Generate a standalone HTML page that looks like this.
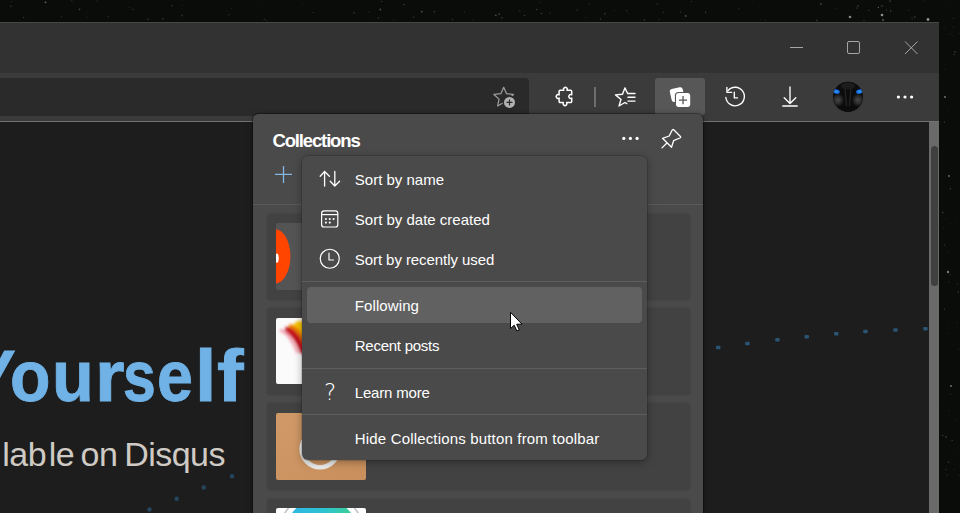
<!DOCTYPE html>
<html lang="en">
<head>
<meta charset="utf-8">
<title>Collections</title>
<style>
html,body{margin:0;padding:0;}
body{width:960px;height:513px;overflow:hidden;position:relative;background:#0a0c0a;font-family:"Liberation Sans",sans-serif;}
.abs{position:absolute;}
#stars{left:0;top:0;width:960px;height:513px;filter:blur(0.35px);}
#win{left:0;top:22px;width:939px;height:491px;background:#1d1d1d;overflow:hidden;}
#titlebar{left:0;top:0;width:939px;height:51px;background:#323232;border-top:1px solid #474747;box-sizing:border-box;}
#toolbar{left:0;top:51px;width:939px;height:48px;background:#3b3b3b;}
#tbline{left:0;top:99px;width:939px;height:1px;background:#727272;}
#addr{left:0;top:56px;width:529px;height:38px;background:#2a2a2a;border-radius:0 4px 4px 0;}
#page{left:0;top:100px;width:929px;height:391px;background:#1d1d1d;overflow:hidden;}
#sbtrack{left:929px;top:100px;width:10px;height:391px;background:#6a6a6a;}
#sbthumb{left:931px;top:124px;width:7px;height:140px;background:#404040;border-radius:3.5px;}
#activebtn{left:655px;top:56px;width:50px;height:37px;background:#575757;border-radius:3px;}
#tbicons{left:0;top:0;width:939px;height:491px;}
#h2 span{position:relative;}
#h1 span{position:absolute;top:0;display:block;transform-origin:0 0;}
#h1{-webkit-text-stroke:0.9px #70b2e6;left:0;top:218px;font-size:72px;font-weight:bold;color:#70b2e6;white-space:nowrap;line-height:1;letter-spacing:-0.4px;}
#h2{left:0px;top:314.8px;font-size:34px;color:#cfcac4;white-space:nowrap;line-height:1;letter-spacing:-0.54px;}
#panel{left:253px;top:114px;width:450px;height:399px;background:#4a4a4a;border-radius:5.5px 5.5px 0 0;box-shadow:0 1px 6px rgba(0,0,0,.42),0 0 0 1px rgba(0,0,0,.28);}
#ptitle{left:19.5px;top:18px;font-size:18.5px;font-weight:bold;color:#fff;letter-spacing:-1.15px;line-height:1;white-space:nowrap;}
#pline{left:0;top:90px;width:450px;height:1px;background:#5a5a5a;}
.card{left:14.3px;width:423.2px;height:86.6px;background:#424242;border-radius:4px;box-shadow:0 0 1.5px rgba(0,0,0,.25);}
.thumb{left:8.7px;top:9.7px;width:90.2px;height:66.6px;border-radius:2px;overflow:hidden;}
.thumb svg{position:absolute;left:0;top:0;}
#menu{left:302px;top:156px;width:345px;height:304px;background:#4a4a4a;border-radius:6px;box-shadow:0 2px 8px rgba(0,0,0,.34),0 0 0 1px rgba(0,0,0,.11);}
.mi{left:52.8px;font-size:15px;color:#fff;white-space:nowrap;line-height:1;}
.sep{left:0;width:345px;height:1px;background:#5e5e5e;}
#qm{left:21px;top:225px;width:14px;text-align:center;font-family:"DejaVu Sans Light","DejaVu Sans",sans-serif;font-weight:200;font-size:23px;line-height:1;color:#fff;}
#hover{left:5px;top:131.2px;width:335px;height:35.8px;background:#616161;border-radius:4px;}
</style>
</head>
<body>
<svg id="stars" class="abs" width="960" height="513" viewBox="0 0 960 513"><circle cx="850.0" cy="17.0" r="1.3" fill="#fff" opacity="0.50"/><circle cx="882.0" cy="15.0" r="1.3" fill="#fff" opacity="0.55"/><circle cx="883.0" cy="20.0" r="0.9" fill="#fff" opacity="0.35"/><circle cx="928.0" cy="19.5" r="1.4" fill="#fff" opacity="0.55"/><circle cx="858.0" cy="6.0" r="0.8" fill="#fff" opacity="0.25"/><circle cx="882.0" cy="6.0" r="0.8" fill="#fff" opacity="0.25"/><circle cx="890.6" cy="11.0" r="0.8" fill="#fff" opacity="0.25"/><circle cx="914.8" cy="17.0" r="0.7" fill="#fff" opacity="0.25"/><circle cx="945.0" cy="97.0" r="1.1" fill="#fff" opacity="0.40"/><circle cx="949.0" cy="176.0" r="0.9" fill="#fff" opacity="0.40"/><circle cx="948.0" cy="272.0" r="1.2" fill="#fff" opacity="0.45"/><circle cx="951.0" cy="386.0" r="1.0" fill="#fff" opacity="0.40"/><circle cx="946.0" cy="437.0" r="0.8" fill="#fff" opacity="0.25"/><circle cx="955.0" cy="52.0" r="0.7" fill="#fff" opacity="0.25"/><circle cx="434.3" cy="11.8" r="0.7" fill="#fff" opacity="0.22"/><circle cx="820.8" cy="4.0" r="0.9" fill="#fff" opacity="0.22"/><circle cx="589.4" cy="3.9" r="0.7" fill="#fff" opacity="0.17"/><circle cx="87.0" cy="17.0" r="0.4" fill="#fff" opacity="0.26"/><circle cx="380.3" cy="9.5" r="0.9" fill="#fff" opacity="0.28"/><circle cx="598.2" cy="17.5" r="0.4" fill="#fff" opacity="0.10"/><circle cx="182.6" cy="5.1" r="0.4" fill="#fff" opacity="0.31"/><circle cx="313.2" cy="12.4" r="0.5" fill="#fff" opacity="0.24"/><circle cx="614.7" cy="10.5" r="0.4" fill="#fff" opacity="0.22"/><circle cx="267.0" cy="21.0" r="0.4" fill="#fff" opacity="0.29"/><circle cx="302.7" cy="4.8" r="0.6" fill="#fff" opacity="0.09"/><circle cx="540.6" cy="2.3" r="0.4" fill="#fff" opacity="0.33"/><circle cx="371.1" cy="20.1" r="0.4" fill="#fff" opacity="0.14"/><circle cx="890.0" cy="1.1" r="0.7" fill="#fff" opacity="0.37"/><circle cx="381.5" cy="1.5" r="0.5" fill="#fff" opacity="0.31"/><circle cx="259.0" cy="1.8" r="0.6" fill="#fff" opacity="0.08"/><circle cx="393.6" cy="19.4" r="0.5" fill="#fff" opacity="0.15"/><circle cx="97.0" cy="1.3" r="0.7" fill="#fff" opacity="0.13"/><circle cx="536.9" cy="9.4" r="0.5" fill="#fff" opacity="0.38"/><circle cx="738.7" cy="8.8" r="0.7" fill="#fff" opacity="0.11"/><circle cx="403.9" cy="4.5" r="0.6" fill="#fff" opacity="0.34"/><circle cx="935.9" cy="12.4" r="0.4" fill="#fff" opacity="0.14"/><circle cx="378.5" cy="17.9" r="0.9" fill="#fff" opacity="0.11"/><circle cx="949.7" cy="4.5" r="0.6" fill="#fff" opacity="0.08"/><circle cx="585.9" cy="17.4" r="0.7" fill="#fff" opacity="0.10"/><circle cx="86.5" cy="12.2" r="0.5" fill="#fff" opacity="0.08"/><circle cx="353.9" cy="13.1" r="0.5" fill="#fff" opacity="0.37"/><circle cx="464.4" cy="12.1" r="0.7" fill="#fff" opacity="0.13"/><circle cx="148.0" cy="19.1" r="0.9" fill="#fff" opacity="0.15"/><circle cx="182.2" cy="15.5" r="0.9" fill="#fff" opacity="0.14"/><circle cx="912.1" cy="18.5" r="0.9" fill="#fff" opacity="0.10"/><circle cx="45.5" cy="2.3" r="0.9" fill="#fff" opacity="0.37"/><circle cx="228.9" cy="14.8" r="0.6" fill="#fff" opacity="0.21"/><circle cx="868.6" cy="10.3" r="0.9" fill="#fff" opacity="0.13"/><circle cx="691.5" cy="1.4" r="0.5" fill="#fff" opacity="0.22"/><circle cx="627.4" cy="12.9" r="0.4" fill="#fff" opacity="0.16"/><circle cx="880.7" cy="4.3" r="0.4" fill="#fff" opacity="0.10"/><circle cx="395.0" cy="5.2" r="0.4" fill="#fff" opacity="0.13"/><circle cx="354.0" cy="12.0" r="0.5" fill="#fff" opacity="0.11"/><circle cx="132.9" cy="9.5" r="0.6" fill="#fff" opacity="0.28"/><circle cx="663.6" cy="12.3" r="0.5" fill="#fff" opacity="0.26"/><circle cx="886.6" cy="10.0" r="0.6" fill="#fff" opacity="0.29"/><circle cx="924.3" cy="0.4" r="0.4" fill="#fff" opacity="0.22"/><circle cx="701.3" cy="6.7" r="0.4" fill="#fff" opacity="0.10"/><circle cx="524.3" cy="15.5" r="0.5" fill="#fff" opacity="0.32"/><circle cx="878.4" cy="7.4" r="0.7" fill="#fff" opacity="0.35"/><circle cx="836.3" cy="8.8" r="0.4" fill="#fff" opacity="0.34"/><circle cx="549.9" cy="13.1" r="0.7" fill="#fff" opacity="0.19"/><circle cx="11.9" cy="1.5" r="0.4" fill="#fff" opacity="0.27"/><circle cx="953.6" cy="18.5" r="0.6" fill="#fff" opacity="0.20"/><circle cx="705.6" cy="12.2" r="0.7" fill="#fff" opacity="0.22"/><circle cx="519.6" cy="10.9" r="0.9" fill="#fff" opacity="0.09"/><circle cx="577.2" cy="10.1" r="0.5" fill="#fff" opacity="0.37"/><circle cx="108.4" cy="16.4" r="0.7" fill="#fff" opacity="0.16"/><circle cx="10.9" cy="6.3" r="0.9" fill="#fff" opacity="0.14"/><circle cx="162.8" cy="19.0" r="0.7" fill="#fff" opacity="0.23"/><circle cx="231.8" cy="8.5" r="0.6" fill="#fff" opacity="0.14"/><circle cx="413.7" cy="16.9" r="0.5" fill="#fff" opacity="0.34"/><circle cx="369.0" cy="12.2" r="0.6" fill="#fff" opacity="0.14"/><circle cx="129.2" cy="7.4" r="0.4" fill="#fff" opacity="0.29"/><circle cx="912.0" cy="5.8" r="0.5" fill="#fff" opacity="0.11"/><circle cx="452.5" cy="19.4" r="0.7" fill="#fff" opacity="0.19"/><circle cx="499.2" cy="14.1" r="0.9" fill="#fff" opacity="0.22"/><circle cx="71.7" cy="0.7" r="0.9" fill="#fff" opacity="0.09"/><circle cx="680.3" cy="12.0" r="0.6" fill="#fff" opacity="0.27"/><circle cx="541.5" cy="13.5" r="0.7" fill="#fff" opacity="0.22"/><circle cx="23.7" cy="17.4" r="0.5" fill="#fff" opacity="0.31"/><circle cx="765.0" cy="20.7" r="0.4" fill="#fff" opacity="0.21"/><circle cx="604.8" cy="13.8" r="0.6" fill="#fff" opacity="0.37"/><circle cx="657.1" cy="4.2" r="0.7" fill="#fff" opacity="0.16"/><circle cx="685.7" cy="15.9" r="0.9" fill="#fff" opacity="0.29"/><circle cx="171.9" cy="5.7" r="0.6" fill="#fff" opacity="0.24"/><circle cx="908.9" cy="10.5" r="0.5" fill="#fff" opacity="0.20"/><circle cx="760.3" cy="19.0" r="0.4" fill="#fff" opacity="0.20"/><circle cx="856.9" cy="8.1" r="0.7" fill="#fff" opacity="0.22"/><circle cx="600.5" cy="19.1" r="0.7" fill="#fff" opacity="0.25"/><circle cx="626.6" cy="10.6" r="0.6" fill="#fff" opacity="0.22"/><circle cx="625.3" cy="4.3" r="0.4" fill="#fff" opacity="0.14"/><circle cx="864.0" cy="20.6" r="0.6" fill="#fff" opacity="0.24"/><circle cx="759.2" cy="6.7" r="0.4" fill="#fff" opacity="0.18"/><circle cx="79.5" cy="9.3" r="0.9" fill="#fff" opacity="0.21"/><circle cx="264.2" cy="19.3" r="0.5" fill="#fff" opacity="0.32"/><circle cx="61.5" cy="16.8" r="0.5" fill="#fff" opacity="0.24"/><circle cx="659.1" cy="19.2" r="0.7" fill="#fff" opacity="0.12"/><circle cx="495.9" cy="15.2" r="0.7" fill="#fff" opacity="0.36"/><circle cx="472.9" cy="19.9" r="0.4" fill="#fff" opacity="0.31"/><circle cx="421.8" cy="11.7" r="0.9" fill="#fff" opacity="0.27"/><circle cx="501.9" cy="17.7" r="0.9" fill="#fff" opacity="0.16"/><circle cx="644.4" cy="20.1" r="0.9" fill="#fff" opacity="0.14"/><circle cx="816.7" cy="20.3" r="0.9" fill="#fff" opacity="0.16"/><circle cx="950.5" cy="223.8" r="0.4" fill="#fff" opacity="0.19"/><circle cx="952.5" cy="35.6" r="0.4" fill="#fff" opacity="0.19"/><circle cx="948.6" cy="415.3" r="0.4" fill="#fff" opacity="0.19"/><circle cx="954.1" cy="54.4" r="0.7" fill="#fff" opacity="0.17"/><circle cx="959.2" cy="475.4" r="0.6" fill="#fff" opacity="0.13"/><circle cx="950.4" cy="188.8" r="0.7" fill="#fff" opacity="0.20"/><circle cx="943.1" cy="228.0" r="0.4" fill="#fff" opacity="0.28"/><circle cx="943.5" cy="404.6" r="0.4" fill="#fff" opacity="0.09"/><circle cx="944.0" cy="27.8" r="0.6" fill="#fff" opacity="0.15"/><circle cx="947.8" cy="326.3" r="0.4" fill="#fff" opacity="0.19"/><circle cx="952.1" cy="440.3" r="0.6" fill="#fff" opacity="0.24"/><circle cx="954.3" cy="453.5" r="0.4" fill="#fff" opacity="0.16"/><circle cx="948.9" cy="281.9" r="0.5" fill="#fff" opacity="0.20"/><circle cx="957.4" cy="284.2" r="0.5" fill="#fff" opacity="0.20"/><circle cx="957.2" cy="322.4" r="0.5" fill="#fff" opacity="0.13"/><circle cx="955.1" cy="420.0" r="0.5" fill="#fff" opacity="0.15"/><circle cx="947.0" cy="475.1" r="0.5" fill="#fff" opacity="0.25"/><circle cx="944.7" cy="69.6" r="0.5" fill="#fff" opacity="0.11"/><circle cx="942.7" cy="212.5" r="0.7" fill="#fff" opacity="0.26"/><circle cx="949.0" cy="409.9" r="0.5" fill="#fff" opacity="0.12"/><circle cx="952.9" cy="414.2" r="0.4" fill="#fff" opacity="0.12"/><circle cx="954.0" cy="469.5" r="0.6" fill="#fff" opacity="0.11"/><circle cx="950.6" cy="394.3" r="0.5" fill="#fff" opacity="0.26"/><circle cx="950.2" cy="33.9" r="0.7" fill="#fff" opacity="0.11"/><circle cx="944.5" cy="122.1" r="0.5" fill="#fff" opacity="0.30"/><circle cx="958.6" cy="68.8" r="0.4" fill="#fff" opacity="0.11"/><circle cx="953.9" cy="60.1" r="0.4" fill="#fff" opacity="0.15"/><circle cx="949.9" cy="275.0" r="0.7" fill="#fff" opacity="0.13"/><circle cx="948.1" cy="333.3" r="0.4" fill="#fff" opacity="0.27"/><circle cx="944.4" cy="244.9" r="0.6" fill="#fff" opacity="0.17"/><circle cx="944.7" cy="103.1" r="0.4" fill="#fff" opacity="0.15"/><circle cx="942.6" cy="435.4" r="0.7" fill="#fff" opacity="0.21"/><circle cx="944.6" cy="309.0" r="0.6" fill="#fff" opacity="0.26"/><circle cx="945.9" cy="469.4" r="0.5" fill="#fff" opacity="0.26"/><circle cx="948.7" cy="462.2" r="0.6" fill="#fff" opacity="0.25"/><circle cx="955.5" cy="221.2" r="0.5" fill="#fff" opacity="0.10"/><circle cx="947.5" cy="252.2" r="0.4" fill="#fff" opacity="0.28"/><circle cx="959.8" cy="465.2" r="0.4" fill="#fff" opacity="0.13"/><circle cx="958.9" cy="349.1" r="0.6" fill="#fff" opacity="0.13"/><circle cx="948.7" cy="111.3" r="0.4" fill="#fff" opacity="0.17"/><circle cx="960.0" cy="337.4" r="0.4" fill="#fff" opacity="0.25"/><circle cx="959.6" cy="33.2" r="0.4" fill="#fff" opacity="0.24"/><circle cx="945.9" cy="219.2" r="0.4" fill="#fff" opacity="0.25"/><circle cx="953.3" cy="27.3" r="0.6" fill="#fff" opacity="0.14"/><circle cx="958.2" cy="292.1" r="0.7" fill="#fff" opacity="0.29"/></svg>
<div id="win" class="abs">
  <div id="titlebar" class="abs"></div>
  <div id="toolbar" class="abs"></div>
  <div id="tbline" class="abs"></div>
  <div id="addr" class="abs"></div>
  <div id="activebtn" class="abs"></div>
  <div id="page" class="abs">
    <div id="h1" class="abs"><span style="left:-29.41px;transform:scaleX(0.930)">Y</span><span style="left:10.36px;transform:scaleX(0.920)">o</span><span style="left:51.80px;transform:scaleX(0.950)">u</span><span style="left:94.78px;transform:scaleX(1.054)">r</span><span style="left:123.37px;transform:scaleX(0.817)">s</span><span style="left:156.91px;transform:scaleX(0.897)">e</span><span style="left:195.40px;transform:scaleX(1.070)">l</span><span style="left:217.09px;transform:scaleX(1.108)">f</span></div>
    <div id="h2" class="abs"><span style="left:2.3px">lab</span><span style="left:5.1px">le</span> <span style="left:2.5px">on</span> <span style="left:0.5px">Disqus</span></div>
    <svg id="pgdots" class="abs" style="left:0;top:0" width="929" height="391" viewBox="0 122 929 391"><rect x="716.0" y="345.8" width="4.5" height="3.5" rx="1" fill="#2a5474"/><rect x="745.2" y="341.8" width="4.5" height="3.5" rx="1" fill="#2a5474"/><rect x="775.2" y="338.0" width="4.5" height="3.5" rx="1" fill="#2a5474"/><rect x="804.5" y="335.0" width="4.5" height="3.5" rx="1" fill="#2a5474"/><rect x="834.0" y="332.0" width="4.5" height="3.5" rx="1" fill="#2a5474"/><rect x="863.2" y="329.8" width="4.5" height="3.5" rx="1" fill="#2a5474"/><rect x="893.2" y="328.2" width="4.5" height="3.5" rx="1" fill="#2a5474"/><rect x="923.2" y="327.0" width="4.5" height="3.5" rx="1" fill="#2a5474"/><circle cx="232.0" cy="476.2" r="2.2" fill="#25465f"/><circle cx="203.8" cy="487.5" r="2.2" fill="#25465f"/><circle cx="176.7" cy="498.7" r="2.2" fill="#25465f"/><circle cx="149.5" cy="509.5" r="2.2" fill="#25465f"/></svg>
  </div>
  <div id="sbtrack" class="abs"></div>
  <div id="sbthumb" class="abs"></div>
  <svg id="tbicons" class="abs" width="939" height="491" viewBox="0 22 939 491">
<g stroke="#a6a6a6" stroke-width="1" fill="none"><path d="M790 47.5H803"/><rect x="847.5" y="41.5" width="12" height="12" rx="1.5"/><path d="M905 41.5L917.5 54M917.5 41.5L905 54"/></g>
<path d="M503.70 87.30 L506.58 93.64 L513.50 94.42 L508.36 99.11 L509.75 105.93 L503.70 102.50 L497.65 105.93 L499.04 99.11 L493.90 94.42 L500.82 93.64Z" fill="none" stroke="#9c9c9c" stroke-width="1.25" stroke-linejoin="round"/>
<circle cx="509.5" cy="102.4" r="6.9" fill="#2a2a2a"/><circle cx="509.5" cy="102.4" r="5.5" fill="#b2b2b2"/><path d="M506.5 102.4H512.5M509.5 99.4V105.4" stroke="#2a2a2a" stroke-width="1.2"/>
<path d="M560.3 90.3H563.8a1.9 1.9 0 1 1 3.2 0H570.5a1.2 1.2 0 0 1 1.2 1.2V94.85a1.9 1.9 0 1 0 0 3.2V101.4a1.2 1.2 0 0 1 -1.2 1.2H566.6a1.9 1.9 0 1 1 -3.2 0H560.3a1.2 1.2 0 0 1 -1.2 -1.2V98.05a1.9 1.9 0 1 1 0 -3.2V91.5a1.2 1.2 0 0 1 1.2 -1.2Z" fill="none" stroke="#fff" stroke-width="1.5" stroke-linejoin="round"/>
<rect x="594.2" y="87" width="1.6" height="20" fill="#7a7a7a"/>
<g fill="none" stroke="#fff" stroke-width="1.4" stroke-linejoin="round" stroke-linecap="round"><path d="M635 93.5H627.6L624.9 87.9L622.5 94.2L615.5 94.9L621 99.5L619 106L624.9 102.5L626.8 103.6"/><path d="M628 97.3H635M628 101.1H635"/></g>
<rect x="670.6" y="88" width="13.2" height="13.2" rx="2.6" fill="#fff" transform="rotate(-13 677.2 94.6)"/><rect x="674.9" y="92" width="16.4" height="16" rx="3.6" fill="#575757"/><rect x="676" y="93.1" width="14.2" height="13.8" rx="2.7" fill="#fff"/><path d="M679 100.1H687.1M683.05 96V104.2" stroke="#575757" stroke-width="1.3"/>
<g fill="none" stroke="#fff" stroke-width="1.35" stroke-linecap="round" stroke-linejoin="round"><path d="M728 90.6A9.25 9.25 0 1 1 725.9 97.5"/><path d="M726.9 87.3V92.3H731.7"/><path d="M734.3 92.2V97.9H737.5"/></g>
<g fill="none" stroke="#fff" stroke-width="1.35" stroke-linecap="round" stroke-linejoin="round"><path d="M790 87V103.4M784.2 97.7L790 103.5L795.8 97.7M782.8 106H797.2"/></g>
<defs><radialGradient id="ck"><stop offset="0" stop-color="#4a4a4a"/><stop offset=".6" stop-color="#333" stop-opacity=".7"/><stop offset="1" stop-color="#222" stop-opacity="0"/></radialGradient><radialGradient id="ey"><stop offset="0" stop-color="#3a9bff"/><stop offset=".7" stop-color="#1670e0"/><stop offset="1" stop-color="#0c4aa0"/></radialGradient><clipPath id="avc"><circle cx="848" cy="96.9" r="15.1"/></clipPath></defs><circle cx="848" cy="96.9" r="15.1" fill="#0c0c0c"/><g clip-path="url(#avc)"><ellipse cx="838" cy="100" rx="6.5" ry="7" fill="url(#ck)"/><ellipse cx="858" cy="100" rx="6.5" ry="7" fill="url(#ck)"/><path d="M845 88L846.5 106M851 88L849.5 106" stroke="#262626" stroke-width="1.2" fill="none"/><ellipse cx="848" cy="86" rx="7" ry="3.5" fill="#1c1c1c"/><ellipse cx="836.3" cy="91.6" rx="3.7" ry="2.3" fill="url(#ey)" transform="rotate(14 836.3 91.6)"/><ellipse cx="859.6" cy="91.6" rx="3.7" ry="2.3" fill="url(#ey)" transform="rotate(-14 859.6 91.6)"/></g>
<g fill="#fff"><circle cx="898.4" cy="97" r="1.6"/><circle cx="905" cy="97" r="1.6"/><circle cx="911.6" cy="97" r="1.6"/></g>
</svg>
</div>
<div id="panel" class="abs">
  <div id="ptitle" class="abs">Collections</div>
  <div id="pline" class="abs"></div>
  <div class="card abs" style="top:99.5px"><div class="thumb abs" id="t1"><svg width="91" height="67" viewBox="0 0 91 67"><rect width="91" height="67" fill="#545454"/><ellipse cx="-1" cy="33.3" rx="15.4" ry="27.2" fill="#ff4500"/><ellipse cx="0.9" cy="35.2" rx="1.8" ry="4.6" fill="#fff"/></svg></div></div>
  <div class="card abs" style="top:194.1px"><div class="thumb abs" id="t2"><svg width="91" height="67" viewBox="0 0 91 67"><defs><filter id="bl" x="-30%" y="-30%" width="160%" height="160%"><feGaussianBlur stdDeviation="1.7"/></filter></defs><rect width="91" height="67" fill="#fbfbfb"/><g filter="url(#bl)"><ellipse cx="24" cy="10.5" rx="7.5" ry="7.5" fill="#f9c400"/><path d="M13 8C19 10 25 15 31 29" stroke="#ee7a00" stroke-width="4.5" fill="none"/><path d="M9 12C15 12.5 21 17 28 35" stroke="#c40f1c" stroke-width="6.6" fill="none"/><path d="M4 12C10 14 15 19 22 35" stroke="#f3a6b4" stroke-width="3" fill="none"/></g></svg></div></div>
  <div class="card abs" style="top:289.3px"><div class="thumb abs" id="t3"><svg width="91" height="67" viewBox="0 0 91 67"><defs><linearGradient id="tan" x1="0" y1="0" x2="1" y2="1"><stop offset="0" stop-color="#d09a68"/><stop offset="1" stop-color="#c98f5c"/></linearGradient></defs><rect width="91" height="67" fill="url(#tan)"/><circle cx="44" cy="36" r="18.3" fill="none" stroke="#ececec" stroke-width="4.6"/></svg></div></div>
  <div class="card abs" style="top:384.5px"><div class="thumb abs" id="t4"><svg width="91" height="67" viewBox="0 0 91 67"><defs><linearGradient id="cg" x1="0" y1="0" x2="1" y2="0"><stop offset="0" stop-color="#2db4ea"/><stop offset=".55" stop-color="#2cc4cf"/><stop offset="1" stop-color="#3fd088"/></linearGradient></defs><rect width="91" height="67" fill="#fff"/><circle cx="45.5" cy="27" r="42.6" fill="#fff" stroke="#c6c6ce" stroke-width="1.8"/><circle cx="45.5" cy="27" r="36.8" fill="url(#cg)"/></svg></div></div>
  <svg id="picons" class="abs" style="left:0;top:0" width="450" height="399" viewBox="253 114 450 399">
<path d="M275 174.4H292M283.5 165.9V182.9" stroke="#85b6e2" stroke-width="1.3" fill="none"/>
<g fill="#fff"><circle cx="623.8" cy="138.4" r="1.6"/><circle cx="630.4" cy="138.4" r="1.6"/><circle cx="637.1" cy="138.4" r="1.6"/></g>
<g fill="none" stroke="#fff" stroke-width="1.3" stroke-linejoin="round" stroke-linecap="round"><path d="M669.2 136L672.1 130.3Q672.9 128.9 674 130L680.2 136.2Q681.3 137.3 679.9 138L673.6 140.7L671.5 147.3L662.5 138.3Z"/><path d="M666.7 143.2L662 147.9"/></g>
</svg>
</div>
<div id="menu" class="abs">
  <div id="hover" class="abs"></div>
  <div class="sep abs" style="top:125px"></div>
  <div class="sep abs" style="top:212px"></div>
  <div class="sep abs" style="top:258px"></div>
  <div class="mi abs" style="top:16px">Sort by name</div>
  <div class="mi abs" style="top:56px">Sort by date created</div>
  <div class="mi abs" style="top:96px;letter-spacing:-0.07px">Sort by recently used</div>
  <div class="mi abs" style="top:142px;letter-spacing:0.1px">Following</div>
  <div class="mi abs" style="top:182px;letter-spacing:-0.26px">Recent posts</div>
  <div class="mi abs" style="top:229px;letter-spacing:-0.18px">Learn more</div>
  <div class="mi abs" style="top:275px;letter-spacing:0.17px">Hide Collections button from toolbar</div>
  <div id="qm" class="abs">?</div>
  <svg id="micons" class="abs" style="left:0;top:0" width="345" height="304" viewBox="302 156 345 304">
<g fill="none" stroke="#fff" stroke-width="1.3" stroke-linecap="round" stroke-linejoin="round"><path d="M324.6 186V171.5M320.2 176.2L324.6 171.5L329.4 176.2"/><path d="M334.8 171.5V185.8M330.2 181.3L334.8 186L339.6 181.3"/></g>
<g fill="none" stroke="#fff" stroke-width="1.2"><rect x="321.6" y="210.8" width="16.2" height="16.2" rx="2.6"/><path d="M321.6 214.6H337.8"/></g><g fill="#fff"><circle cx="325.9" cy="219" r="1.05"/><circle cx="329.75" cy="219" r="1.05"/><circle cx="333.6" cy="219" r="1.05"/><circle cx="325.9" cy="222.6" r="1.05"/><circle cx="329.75" cy="222.6" r="1.05"/></g>
<g fill="none" stroke="#fff" stroke-width="1.2" stroke-linecap="round" stroke-linejoin="round"><circle cx="329.75" cy="258.75" r="9.5"/><path d="M329 253.2V260H333.5"/></g>
</svg>
</div>
<svg id="cursor" class="abs" style="left:0;top:0" width="960" height="513" viewBox="0 0 960 513"><path d="M510.5 312.3V328.6L514.2 325.2L516.9 331L519.3 330L516.7 324.2H522Z" fill="#fff" stroke="#000" stroke-width="1" stroke-linejoin="miter"/></svg>
</body>
</html>
